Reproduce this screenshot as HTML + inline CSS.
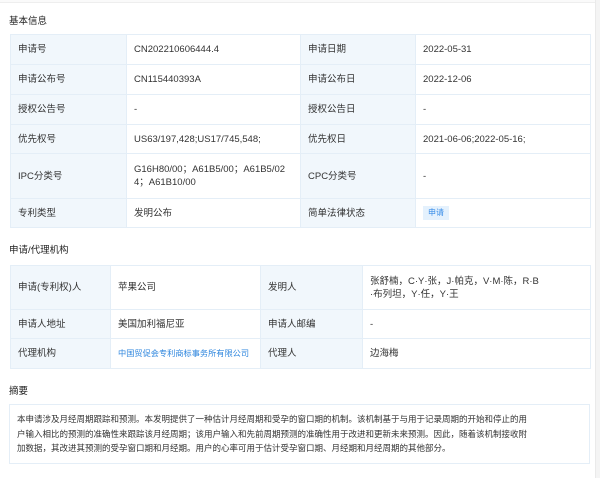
<!DOCTYPE html>
<html><head><meta charset="utf-8"><style>
*{margin:0;padding:0;box-sizing:border-box}
body{width:600px;height:478px;background:#fff;font-family:"Liberation Sans","Noto Sans CJK SC",sans-serif;font-size:9.5px;color:#333;position:relative;overflow:hidden}
.topbar{position:absolute;left:0;top:0;width:600px;height:3px;border-bottom:1px solid #eee;background:#fafafa}
.rb{position:absolute;left:595px;top:0;width:5px;height:478px;background:#f4f4f4;border-left:1px solid #eaeaea}
.h{position:absolute;left:9px;font-size:9.5px;color:#222}
table{position:absolute;border-collapse:collapse;table-layout:fixed}
td{border:1px solid #e4eef7;padding:0 7px;vertical-align:middle;line-height:13px;word-break:break-all}
td.l{background:#f1f7fc}
.tag{display:inline-block;background:#e4f1fd;color:#3b8ee8;font-size:8px;padding:2px 5px;line-height:10px}
a{color:#2e86de;text-decoration:none;white-space:nowrap;font-size:8.2px}
.ab{position:absolute;left:9px;top:404px;width:581px;height:60px;border:1px solid #e4eef7;padding:7px 60px 4px 7px;line-height:14.5px;font-size:8.5px;word-break:break-all}
</style></head><body>
<div class="topbar"></div>
<div class="rb"></div>
<div class="h" style="top:13px">基本信息</div>
<table style="left:10px;top:34px;width:580px">
<colgroup><col style="width:116px"><col style="width:174px"><col style="width:115px"><col style="width:175px"></colgroup>
<tr style="height:30px"><td class="l">申请号</td><td>CN202210606444.4</td><td class="l">申请日期</td><td>2022-05-31</td></tr>
<tr style="height:30px"><td class="l">申请公布号</td><td>CN115440393A</td><td class="l">申请公布日</td><td>2022-12-06</td></tr>
<tr style="height:30px"><td class="l">授权公告号</td><td>-</td><td class="l">授权公告日</td><td>-</td></tr>
<tr style="height:29px"><td class="l">优先权号</td><td>US63/197,428;US17/745,548;</td><td class="l">优先权日</td><td>2021-06-06;2022-05-16;</td></tr>
<tr style="height:45px"><td class="l">IPC分类号</td><td>G16H80/00；A61B5/00；A61B5/024；A61B10/00</td><td class="l">CPC分类号</td><td>-</td></tr>
<tr style="height:29px"><td class="l">专利类型</td><td>发明公布</td><td class="l">简单法律状态</td><td><span class="tag">申请</span></td></tr>
</table>
<div class="h" style="top:242px">申请/代理机构</div>
<table style="left:10px;top:265px;width:580px">
<colgroup><col style="width:100px"><col style="width:150px"><col style="width:102px"><col style="width:228px"></colgroup>
<tr style="height:44px"><td class="l">申请(专利权)人</td><td>苹果公司</td><td class="l">发明人</td><td>张舒楠，C·Y·张，J·帕克，V·M·陈，R·B<br>·布列坦，Y·任，Y·王</td></tr>
<tr style="height:29px"><td class="l">申请人地址</td><td>美国加利福尼亚</td><td class="l">申请人邮编</td><td>-</td></tr>
<tr style="height:30px"><td class="l">代理机构</td><td><a>中国贸促会专利商标事务所有限公司</a></td><td class="l">代理人</td><td>边海梅</td></tr>
</table>
<div class="h" style="top:383px">摘要</div>
<div class="ab">本申请涉及月经周期跟踪和预测。本发明提供了一种估计月经周期和受孕的窗口期的机制。该机制基于与用于记录周期的开始和停止的用户输入相比的预测的准确性来跟踪该月经周期；该用户输入和先前周期预测的准确性用于改进和更新未来预测。因此，随着该机制接收附加数据，其改进其预测的受孕窗口期和月经期。用户的心率可用于估计受孕窗口期、月经期和月经周期的其他部分。</div>
</body></html>
